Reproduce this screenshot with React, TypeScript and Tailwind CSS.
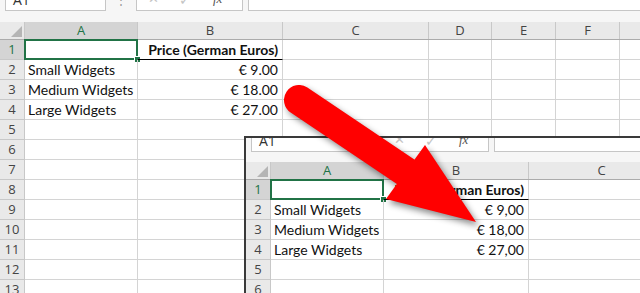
import React from "react";

const COLS = [
  { label: "A", cls: "w-[113px]" },
  { label: "B", cls: "w-[145px]" },
  { label: "C", cls: "w-[146px]" },
  { label: "D", cls: "w-[63px]" },
  { label: "E", cls: "w-[64px]" },
  { label: "F", cls: "w-[64px]" },
  { label: "G", cls: "w-[90px]" },
];

const cellFont = { fontFamily: "Lato, 'Open Sans', sans-serif" };
const uiFont = { fontFamily: "'Open Sans', 'Noto Sans', sans-serif" };

type SheetProps = {
  prices: string[];
  rowCount: number;
  barCls: string;
};

const FormulaBar = ({ barCls }: { barCls: string }) => (
  <div className={`flex items-end overflow-hidden bg-[#f6f6f6] ${barCls}`} style={uiFont}>
    <div className="ml-[5px] flex h-6 w-[101px] shrink-0 items-center border border-[#c6c6c6] bg-white pl-[7px] text-[14px] text-[#333]">
      A1
    </div>
    <div className="flex w-[30px] shrink-0 items-center justify-center pb-[2px] text-[12px] text-[#9a9a9a]">⋮</div>
    <div className="flex h-6 w-[107px] shrink-0 items-center border border-[#c6c6c6] bg-white text-[#c4c4c4]">
      <span className="ml-[11px] text-[13px]">✕</span>
      <span className="ml-[20px] text-[14px]">✓</span>
      <span className="ml-[22px] font-['Liberation_Serif'] text-[13px] italic text-[#555]">fx</span>
    </div>
    <div className="ml-[5px] h-6 w-[600px] shrink-0 border border-[#c6c6c6] bg-white" />
  </div>
);

const Sheet = ({ prices, rowCount, barCls }: SheetProps) => {
  const labels = ["", "Small Widgets", "Medium Widgets", "Large Widgets"];
  return (
    <div className="w-[720px] bg-white">
      <FormulaBar barCls={barCls} />
      <div className="flex h-[18px] border-b border-[#ababab] bg-[#e9e9e9]" style={uiFont}>
        <div className="relative w-[25px] shrink-0 border-r border-[#c8c8c8]">
          <div className="absolute bottom-[2px] right-[2px] h-0 w-0 border-b-[11px] border-l-[11px] border-b-[#b5b5b5] border-l-transparent" />
        </div>
        {COLS.map((c, i) => (
          <div
            key={c.label}
            className={`${c.cls} flex shrink-0 items-center justify-center border-r border-[#c8c8c8] text-[13px] ${
              i === 0 ? "bg-[#d4d4d4] text-[#217346]" : "text-[#444]"
            }`}
          >
            {c.label}
          </div>
        ))}
      </div>
      {Array.from({ length: rowCount }).map((_, r) => (
        <div key={r} className="flex h-5">
          <div
            className={`flex w-[25px] shrink-0 items-center justify-center border-r border-b border-[#c8c8c8] text-[13px] ${
              r === 0 ? "bg-[#d4d4d4] text-[#217346]" : "bg-[#e9e9e9] text-[#444]"
            }`}
            style={uiFont}
          >
            {r + 1}
          </div>
          {COLS.map((c, i) => {
            const isA1 = r === 0 && i === 0;
            const isB1 = r === 0 && i === 1;
            return (
              <div
                key={c.label}
                className={`${c.cls} relative flex shrink-0 items-center whitespace-nowrap border-r border-b text-[14px] text-[#111] ${
                  isB1 ? "border-b-black border-r-[#d4d4d4]" : "border-[#d4d4d4]"
                } ${i === 1 ? "justify-end pr-[4px]" : "pl-[3px]"}`}
                style={cellFont}
              >
                {i === 0 && labels[r]}
                {isB1 && <span className="font-bold">Price (German Euros)</span>}
                {i === 1 && r > 0 && r < 4 && prices[r - 1]}
                {isA1 && (
                  <>
                    <div className="absolute -top-px -left-px -right-px -bottom-px border-2 border-[#217346]" />
                    <div className="absolute -right-[4px] -bottom-[4px] h-[7px] w-[7px] border border-white bg-[#217346]" />
                  </>
                )}
              </div>
            );
          })}
        </div>
      ))}
    </div>
  );
};

const Arrow = () => (
  <svg
    className="pointer-events-none absolute left-0 top-0"
    width="640"
    height="293"
    viewBox="0 0 640 293"
    style={{ filter: "drop-shadow(3px 4px 3px rgba(0,0,0,0.45))" }}
  >
    <line x1="299" y1="100" x2="406" y2="172" stroke="#ff0000" strokeWidth="30" strokeLinecap="round" />
    <polygon points="425,145 386,199 476,222" fill="#ff0000" />
  </svg>
);

export default function App() {
  return (
    <div className="relative h-[293px] w-[640px] overflow-hidden bg-white">
      <Sheet prices={["€ 9.00", "€ 18.00", "€ 27.00"]} rowCount={13} barCls="h-[22px] pb-[11px]" />
      <div className="absolute left-[244px] top-[136px] h-[170px] w-[400px] overflow-hidden border-l-2 border-t-2 border-[#3a3a3a]">
        <Sheet prices={["€ 9,00", "€ 18,00", "€ 27,00"]} rowCount={6} barCls="h-[24px] pb-[10px]" />
      </div>
      <Arrow />
    </div>
  );
}
